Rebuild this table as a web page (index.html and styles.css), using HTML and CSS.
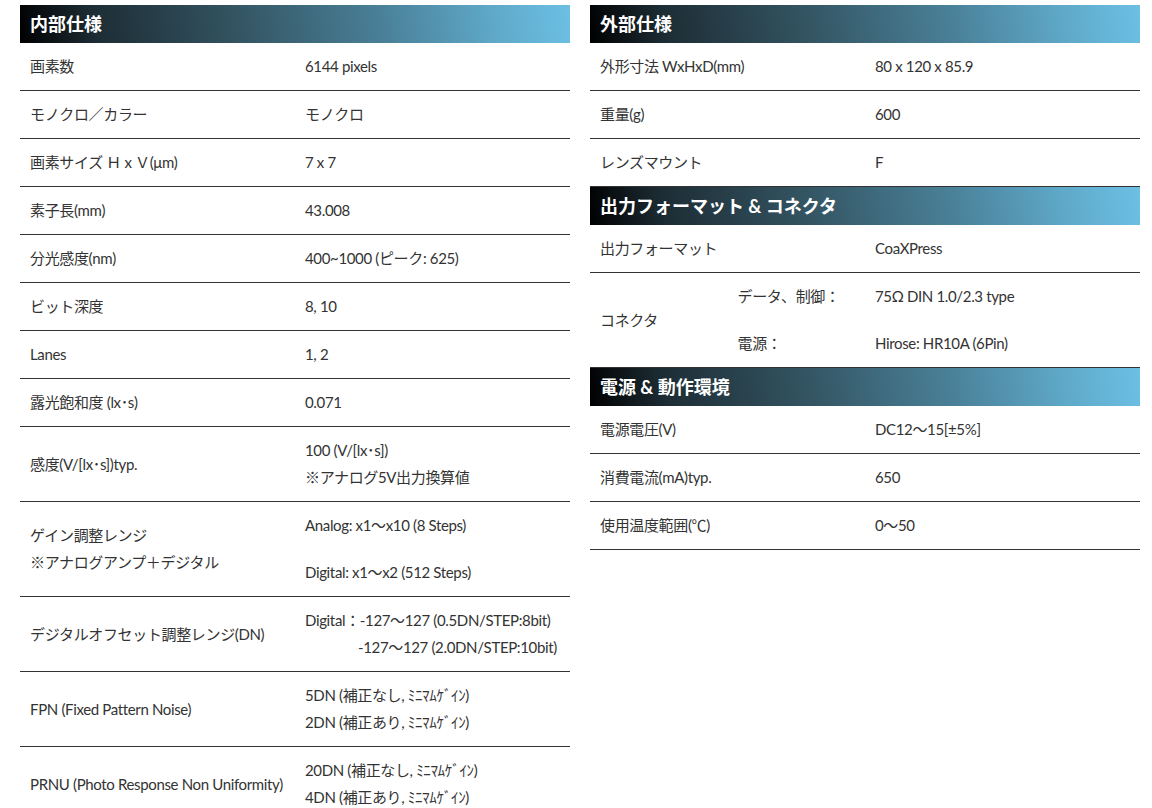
FILE: index.html
```html
<!DOCTYPE html>
<html lang="ja">
<head>
<meta charset="utf-8">
<title>仕様</title>
<link rel="stylesheet" href="styles.css">
</head>
<body>
<div class="page">
  <div class="col">
    <table class="spec">
      <colgroup><col class="q"><col class="q"><col class="q"><col class="q"></colgroup>
      <thead><tr><th colspan="4">内部仕様</th></tr></thead>
      <tbody>
        <tr><td colspan="2">画素数</td><td colspan="2">6144 pixels</td></tr>
        <tr><td colspan="2">モノクロ／カラー</td><td colspan="2">モノクロ</td></tr>
        <tr><td colspan="2">画素サイズ Ｈ x Ｖ(μm)</td><td colspan="2">7 x 7</td></tr>
        <tr><td colspan="2">素子長(mm)</td><td colspan="2">43.008</td></tr>
        <tr><td colspan="2">分光感度(nm)</td><td colspan="2">400~1000 (ピーク: 625)</td></tr>
        <tr><td colspan="2">ビット深度</td><td colspan="2">8, 10</td></tr>
        <tr><td colspan="2">Lanes</td><td colspan="2">1, 2</td></tr>
        <tr><td colspan="2">露光飽和度 (lx･s)</td><td colspan="2">0.071</td></tr>
        <tr><td colspan="2">感度(V/[lx･s])typ.</td><td colspan="2">100 (V/[lx･s])<br>※アナログ5V出力換算値</td></tr>
        <tr class="split"><td colspan="2" rowspan="2">ゲイン調整レンジ<br>※アナログアンプ＋デジタル</td><td colspan="2">Analog: x1～x10 (8 Steps)</td></tr>
        <tr><td colspan="2">Digital: x1～x2 (512 Steps)</td></tr>
        <tr><td colspan="2">デジタルオフセット調整レンジ(DN)</td><td colspan="2" class="nowrap">Digital：-127～127 (0.5DN/STEP:8bit)<br><span class="indent">-127～127 (2.0DN/STEP:10bit)</span></td></tr>
        <tr><td colspan="2">FPN (Fixed Pattern Noise)</td><td colspan="2">5DN (補正なし, ﾐﾆﾏﾑｹﾞｲﾝ)<br>2DN (補正あり, ﾐﾆﾏﾑｹﾞｲﾝ)</td></tr>
        <tr><td colspan="2" class="nowrap">PRNU (Photo Response Non Uniformity)</td><td colspan="2">20DN (補正なし, ﾐﾆﾏﾑｹﾞｲﾝ)<br>4DN (補正あり, ﾐﾆﾏﾑｹﾞｲﾝ)</td></tr>
      </tbody>
    </table>
  </div>
  <div class="col">
    <table class="spec">
      <colgroup><col class="q"><col class="q"><col class="q"><col class="q"></colgroup>
      <thead><tr><th colspan="4">外部仕様</th></tr></thead>
      <tbody>
        <tr><td colspan="2">外形寸法 WxHxD(mm)</td><td colspan="2">80 x 120 x 85.9</td></tr>
        <tr><td colspan="2">重量(g)</td><td colspan="2">600</td></tr>
        <tr><td colspan="2">レンズマウント</td><td colspan="2">F</td></tr>
      </tbody>
    </table>
    <table class="spec">
      <colgroup><col class="q"><col class="q"><col class="q"><col class="q"></colgroup>
      <thead><tr><th colspan="4">出力フォーマット &amp; コネクタ</th></tr></thead>
      <tbody>
        <tr><td colspan="2">出力フォーマット</td><td colspan="2">CoaXPress</td></tr>
        <tr class="split"><td rowspan="2">コネクタ</td><td>データ、制御：</td><td colspan="2">75Ω DIN 1.0/2.3 type</td></tr>
        <tr><td>電源：</td><td colspan="2">Hirose: HR10A (6Pin)</td></tr>
      </tbody>
    </table>
    <table class="spec">
      <colgroup><col class="q"><col class="q"><col class="q"><col class="q"></colgroup>
      <thead><tr><th colspan="4">電源 &amp; 動作環境</th></tr></thead>
      <tbody>
        <tr><td colspan="2">電源電圧(V)</td><td colspan="2">DC12～15[±5%]</td></tr>
        <tr><td colspan="2">消費電流(mA)typ.</td><td colspan="2">650</td></tr>
        <tr><td colspan="2">使用温度範囲(℃)</td><td colspan="2">0～50</td></tr>
      </tbody>
    </table>
  </div>
</div>
</body>
</html>
```
FILE: styles.css
```css
html, body {
  margin: 0;
  padding: 0;
  background: #ffffff;
}

body {
  font-family: Lato, "Noto Sans CJK JP", sans-serif;
  font-size: 15px;
  color: #333333;
}

.page {
  display: flex;
  gap: 20px;
  padding: 5px 0 0 20px;
  align-items: flex-start;
}

.col {
  width: 550px;
  flex: none;
}

.spec {
  width: 100%;
  border-collapse: collapse;
  table-layout: fixed;
}

.spec col.q {
  width: 25%;
}

.spec th {
  height: 38px;
  padding: 0 10px;
  box-sizing: border-box;
  text-align: left;
  font-size: 18px;
  font-weight: bold;
  color: #ffffff;
  line-height: 38px;
  background: linear-gradient(80deg, #000000 0%, #1d2d35 14%, #32525f 38%, #4a8199 66%, #5fa9c9 86%, #6cc0e4 100%);
}

.spec td {
  padding: 10px 10px;
  line-height: 27px;
  letter-spacing: -0.35px;
  vertical-align: middle;
  text-align: left;
  border-bottom: 1px solid #333333;
}

.spec td.nowrap {
  white-space: nowrap;
}

.spec tr.split td {
  border-bottom: none;
}

.spec tr.split td[rowspan] {
  border-bottom: 1px solid #333333;
}

.indent {
  padding-left: 53px;
}
```
